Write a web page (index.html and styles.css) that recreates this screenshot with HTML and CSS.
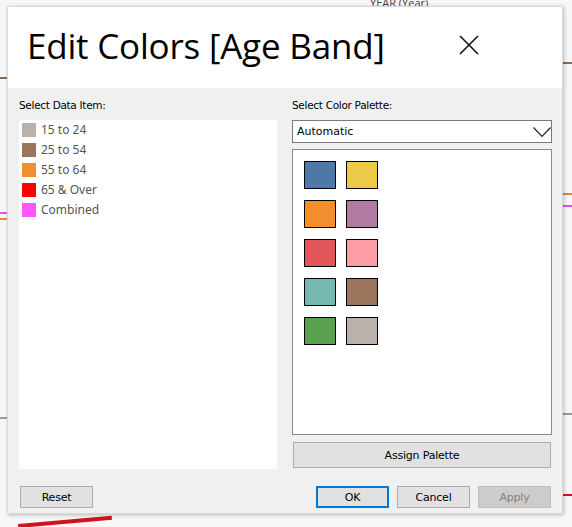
FILE: index.html
```html
<!DOCTYPE html>
<html>
<head>
<meta charset="utf-8">
<link rel="stylesheet" href="styles.css">
</head>
<body>
<div class="backdrop">
  <div class="bg-label">YEAR (Year)</div>
  <span class="stub stub-brown-l"></span>
  <span class="stub stub-brown-r"></span>
  <span class="stub stub-mag-l"></span>
  <span class="stub stub-org-l"></span>
  <span class="stub stub-org-r"></span>
  <span class="stub stub-mag-r"></span>
  <span class="stub stub-gray-l"></span>
  <span class="stub stub-gray-r"></span>
  <span class="stub stub-red-r"></span>
  <span class="stub stub-red-b"></span>

  <div class="dialog">
    <div class="header">
      <h1 class="title">Edit Colors [Age Band]</h1>
      <svg class="close" width="20" height="20" viewBox="0 0 20 20">
        <path d="M1 1 L19 19 M19 1 L1 19" stroke="#111" stroke-width="1.6" fill="none"/>
      </svg>
    </div>
    <div class="body">
      <div class="col">
        <div class="label">Select Data Item:</div>
        <ul class="items">
          <li class="item"><span class="chip c-gray"></span>15 to 24</li>
          <li class="item"><span class="chip c-brown"></span>25 to 54</li>
          <li class="item"><span class="chip c-orange"></span>55 to 64</li>
          <li class="item"><span class="chip c-red"></span>65 &amp; Over</li>
          <li class="item"><span class="chip c-magenta"></span>Combined</li>
        </ul>
      </div>
      <div class="col">
        <div class="label">Select Color Palette:</div>
        <div class="select">
          <span>Automatic</span>
          <svg class="chev" width="18" height="11" viewBox="0 0 18 11">
            <path d="M0.5 0.5 L9 9.5 L17.5 0.5" stroke="#222" stroke-width="1.2" fill="none"/>
          </svg>
        </div>
        <div class="palette">
          <span class="sw p-blue"></span><span class="sw p-yellow"></span>
          <span class="sw p-orange"></span><span class="sw p-purple"></span>
          <span class="sw p-red"></span><span class="sw p-pink"></span>
          <span class="sw p-teal"></span><span class="sw p-brown"></span>
          <span class="sw p-green"></span><span class="sw p-gray"></span>
        </div>
        <button class="btn assign">Assign Palette</button>
      </div>
    </div>
    <div class="footer">
      <button class="btn small">Reset</button>
      <div class="actions">
        <button class="btn small primary">OK</button>
        <button class="btn small">Cancel</button>
        <button class="btn small disabled">Apply</button>
      </div>
    </div>
  </div>
</div>
</body>
</html>
```

FILE: styles.css
```css
* { box-sizing: border-box; }
html, body { margin: 0; padding: 0; }
body {
  width: 572px;
  height: 527px;
  overflow: hidden;
  background: #f7f7f7;
  font-family: "DejaVu Sans", sans-serif;
}
.backdrop {
  position: relative;
  width: 572px;
  height: 527px;
  padding: 6px 9px 0 7px;
}
.bg-label {
  position: absolute;
  left: 370px;
  top: -3px;
  font-family: "Open Sans", sans-serif;
  font-size: 11px;
  line-height: 12px;
  color: #444;
}
.stub { position: absolute; height: 2px; }
.stub-brown-l { left: 0; top: 77px; width: 7px; background: #8c6a58; }
.stub-brown-r { left: 563px; top: 62px; width: 9px; background: #8c6a58; }
.stub-mag-l { left: 0; top: 212px; width: 7px; background: #e34fe6; }
.stub-org-l { left: 0; top: 218px; width: 7px; background: #e0873a; }
.stub-org-r { left: 563px; top: 193px; width: 9px; background: #e0873a; }
.stub-mag-r { left: 563px; top: 205px; width: 9px; background: #e34fe6; }
.stub-gray-l { left: 0; top: 417px; width: 7px; background: #9a9a9a; }
.stub-gray-r { left: 563px; top: 413px; width: 9px; background: #9a9a9a; }
.stub-red-r { left: 563px; top: 494px; width: 9px; background: #d0141d; }
.stub-red-b { left: 18px; top: 524px; width: 94px; height: 4px; background: #d0141d; transform: rotate(-5deg); transform-origin: left top; }

.dialog {
  position: relative;
  width: 556px;
  height: 508px;
  background: #f0f0f0;
  border: 1px solid #d9d9d9;
  box-shadow: 1px 1px 4px rgba(0,0,0,0.25);
  display: flex;
  flex-direction: column;
}
.header {
  height: 81px;
  background: #fff;
  display: flex;
  align-items: center;
  justify-content: space-between;
  padding: 0 83px 0 19px;
}
.title {
  margin: 0;
  font-family: "Open Sans", sans-serif;
  font-weight: 400;
  font-size: 35px;
  color: #000;
  letter-spacing: -0.2px;
  padding-bottom: 4px;
}
.close { margin-top: -5px; }

.body {
  display: grid;
  grid-template-columns: 258px 260px;
  column-gap: 15px;
  padding: 9px 0 0 11px;
}
.col { display: flex; flex-direction: column; }
.label {
  font-family: "DejaVu Sans", sans-serif;
  font-size: 10.5px;
  line-height: 16px;
  height: 16px;
  color: #000;
  margin-bottom: 7px;
  letter-spacing: -0.3px;
}
.items {
  list-style: none;
  margin: 0;
  padding: 3px 0 0 3px;
  height: 349px;
  background: #fff;
}
.item {
  display: flex;
  align-items: center;
  height: 20px;
  padding: 0 0 6px 0;
  font-family: "Noto Sans", sans-serif;
  font-size: 12px;
  line-height: 14px;
  color: #555;
}
.chip {
  width: 14px;
  height: 14px;
  margin-right: 5px;
  flex: none;
}
.c-gray { background: #bab0ac; }
.c-brown { background: #9c755f; }
.c-orange { background: #f28e2b; }
.c-red { background: #ff0000; }
.c-magenta { background: #ff55ff; }

.select {
  height: 23px;
  background: #fff;
  border: 1px solid #7a7a7a;
  display: flex;
  align-items: center;
  justify-content: space-between;
  padding: 0 0 0 4px;
  font-size: 11px;
  color: #000;
}
.chev { margin-top: 1px; }
.palette {
  margin-top: 6px;
  height: 286px;
  background: #fff;
  border: 1px solid #8a8a8a;
  display: grid;
  grid-template-columns: 32px 32px;
  grid-auto-rows: 28px;
  column-gap: 10px;
  row-gap: 11px;
  padding: 11px 0 0 11px;
  align-content: start;
}
.sw { border: 1px solid #000; }
.p-blue { background: #4e79a7; }
.p-yellow { background: #edc948; }
.p-orange { background: #f28e2b; }
.p-purple { background: #b07aa1; }
.p-red { background: #e15759; }
.p-pink { background: #ff9da7; }
.p-teal { background: #76b7b2; }
.p-brown { background: #9c755f; }
.p-green { background: #59a14f; }
.p-gray { background: #bab0ac; }

.btn {
  font-family: "DejaVu Sans", sans-serif;
  font-size: 11px;
  color: #000;
  background: #e1e1e1;
  border: 1px solid #adadad;
  padding: 0;
  margin: 0;
  letter-spacing: -0.2px;
}
.assign {
  margin: 7px 1px 0 1px;
  height: 26px;
}
.footer {
  display: flex;
  justify-content: space-between;
  align-items: center;
  padding: 17px 11px 0 12px;
}
.actions { display: flex; gap: 8px; }
.small { width: 73px; height: 22px; }
.primary { border: 2px solid #0078d7; }
.disabled { background: #cccccc; border-color: #bfbfbf; color: #838383; }
```
